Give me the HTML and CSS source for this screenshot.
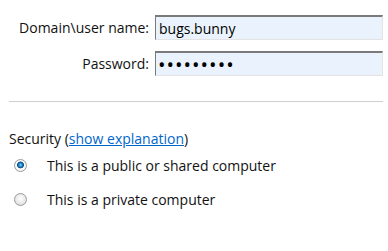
FILE: index.html
```html
<!DOCTYPE html>
<html lang="en">
<head>
    <meta charset="UTF-8">
    <title>Sign in</title>
    <link rel="stylesheet" href="styles.css">
</head>
<body>
    <form class="signin">
        <div class="fields">
            <label for="user">Domain\user name:</label>
            <input type="text" id="user" value="bugs.bunny">

            <label for="pass">Password:</label>
            <input type="password" id="pass" class="pass" value="secret123">
        </div>

        <hr class="sep">

        <div class="security">
            <p class="security-title">Security (<a href="#">show explanation</a>)</p>
            <label class="choice">
                <input type="radio" name="computer" checked>
                <span class="dot"></span>
                This is a public or shared computer
            </label>
            <label class="choice">
                <input type="radio" name="computer">
                <span class="dot"></span>
                This is a private computer
            </label>
        </div>
    </form>
</body>
</html>
```
FILE: styles.css
```css
body {
    margin: 0;
    padding: 15px 5px 0 9px;
    background: #fff;
    font-family: "Open Sans", sans-serif;
    font-size: 14px;
    color: #111;
}

.fields {
    display: grid;
    grid-template-columns: 140px minmax(0, 1fr);
    column-gap: 6px;
    row-gap: 11px;
    align-items: center;
}

.fields label {
    text-align: right;
}

.fields input {
    width: 100%;
    min-width: 0;
    height: 25px;
    box-sizing: border-box;
    margin: 0;
    padding: 0 3px;
    border: 1px solid #e3e3e3;
    border-top: 2px solid #7a7a7a;
    border-left: 1px solid #7a7a7a;
    background: #eaf3fd;
    font-family: "Open Sans", sans-serif;
    font-size: 14px;
    color: #000;
    outline: none;
}

.fields .pass {
    font-size: 20px;
    letter-spacing: 1px;
    padding-left: 2px;
}

.sep {
    border: none;
    border-top: 1px solid #cfcfcf;
    margin: 25px 0 0;
}

.security-title {
    margin: 28px 0 0;
    line-height: 18px;
}

.security a {
    color: #0066cc;
}

.choice {
    display: flex;
    align-items: center;
    height: 34px;
}

.choice input {
    display: none;
}

.dot {
    width: 13px;
    height: 13px;
    margin: 0 20px 0 5px;
    border-radius: 50%;
    box-sizing: border-box;
    border: 1px solid #9a9a9a;
    background: radial-gradient(circle at 50% 40%, #fff, #d6d6d6);
}

.choice input:checked + .dot {
    background: radial-gradient(circle at 50% 45%, #8ad6ff 0, #1c86cc 22%, #0b4d85 38%, #fff 46%, #e4e4e4 100%);
}
```
